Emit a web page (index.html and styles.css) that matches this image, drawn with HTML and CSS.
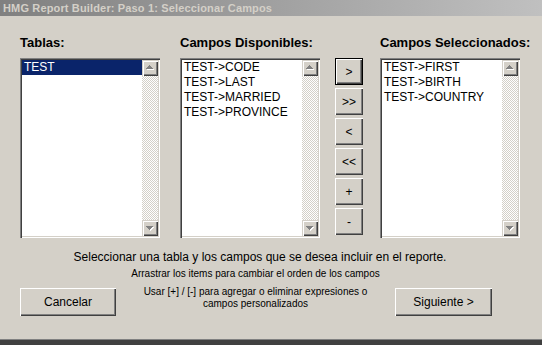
FILE: index.html
```html
<!DOCTYPE html>
<html lang="es">
<head>
  <meta charset="UTF-8">
  <title>HMG Report Builder: Paso 1: Seleccionar Campos</title>
  <link rel="stylesheet" href="styles.css">
</head>
<body>
  <div class="window">
    <div class="titlebar">HMG Report Builder: Paso 1: Seleccionar Campos</div>

    <div class="picker">
      <div class="col col-tables">
        <div class="col-label">Tablas:</div>
        <div class="listbox">
          <ul class="items">
            <li class="selected">TEST</li>
          </ul>
          <div class="scrollbar">
            <div class="scroll-btn">
              <svg width="16" height="16" viewBox="0 0 16 16" shape-rendering="crispEdges"><path fill="#fff" d="M8 6h1v1H8zM7 7h3v1H7zM6 8h5v1H6zM5 9h7v1H5z"/><path fill="#808080" d="M7 5h1v1H7zM6 6h3v1H6zM5 7h5v1H5zM4 8h7v1H4z"/></svg>
            </div>
            <div class="scroll-track"></div>
            <div class="scroll-btn">
              <svg width="16" height="16" viewBox="0 0 16 16" shape-rendering="crispEdges"><path fill="#fff" d="M5 7h7v1H5zM6 8h5v1H6zM7 9h3v1H7zM8 10h1v1H8z"/><path fill="#808080" d="M4 6h7v1H4zM5 7h5v1H5zM6 8h3v1H6zM7 9h1v1H7z"/></svg>
            </div>
          </div>
        </div>
      </div>

      <div class="col col-fields">
        <div class="col-label">Campos Disponibles:</div>
        <div class="listbox">
          <ul class="items">
            <li>TEST-&gt;CODE</li>
            <li>TEST-&gt;LAST</li>
            <li>TEST-&gt;MARRIED</li>
            <li>TEST-&gt;PROVINCE</li>
          </ul>
          <div class="scrollbar">
            <div class="scroll-btn">
              <svg width="16" height="16" viewBox="0 0 16 16" shape-rendering="crispEdges"><path fill="#fff" d="M8 6h1v1H8zM7 7h3v1H7zM6 8h5v1H6zM5 9h7v1H5z"/><path fill="#808080" d="M7 5h1v1H7zM6 6h3v1H6zM5 7h5v1H5zM4 8h7v1H4z"/></svg>
            </div>
            <div class="scroll-track"></div>
            <div class="scroll-btn">
              <svg width="16" height="16" viewBox="0 0 16 16" shape-rendering="crispEdges"><path fill="#fff" d="M5 7h7v1H5zM6 8h5v1H6zM7 9h3v1H7zM8 10h1v1H8z"/><path fill="#808080" d="M4 6h7v1H4zM5 7h5v1H5zM6 8h3v1H6zM7 9h1v1H7z"/></svg>
            </div>
          </div>
        </div>
      </div>

      <div class="col col-moves">
        <button class="move-btn default">&gt;</button>
        <button class="move-btn">&gt;&gt;</button>
        <button class="move-btn">&lt;</button>
        <button class="move-btn">&lt;&lt;</button>
        <button class="move-btn">+</button>
        <button class="move-btn">-</button>
      </div>

      <div class="col col-selected">
        <div class="col-label">Campos Seleccionados:</div>
        <div class="listbox">
          <ul class="items">
            <li>TEST-&gt;FIRST</li>
            <li>TEST-&gt;BIRTH</li>
            <li>TEST-&gt;COUNTRY</li>
          </ul>
          <div class="scrollbar">
            <div class="scroll-btn">
              <svg width="16" height="16" viewBox="0 0 16 16" shape-rendering="crispEdges"><path fill="#fff" d="M8 6h1v1H8zM7 7h3v1H7zM6 8h5v1H6zM5 9h7v1H5z"/><path fill="#808080" d="M7 5h1v1H7zM6 6h3v1H6zM5 7h5v1H5zM4 8h7v1H4z"/></svg>
            </div>
            <div class="scroll-track"></div>
            <div class="scroll-btn">
              <svg width="16" height="16" viewBox="0 0 16 16" shape-rendering="crispEdges"><path fill="#fff" d="M5 7h7v1H5zM6 8h5v1H6zM7 9h3v1H7zM8 10h1v1H8z"/><path fill="#808080" d="M4 6h7v1H4zM5 7h5v1H5zM6 8h3v1H6zM7 9h1v1H7z"/></svg>
            </div>
          </div>
        </div>
      </div>
    </div>

    <div class="message">Seleccionar una tabla y los campos que se desea incluir en el reporte.</div>

    <div class="footer">
      <div class="hint hint-drag">Arrastrar los items para cambiar el orden de los campos</div>
      <button class="btn btn-cancel">Cancelar</button>
      <div class="hint hint-usage">Usar [+] / [-] para agregar o eliminar expresiones o<br>campos personalizados</div>
      <button class="btn btn-next">Siguiente &gt;</button>
    </div>
  </div>
</body>
</html>
```

FILE: styles.css
```css
:root {
  --face: #d4d0c8;
  --light: #ffffff;
  --shadow: #808080;
  --dark: #404040;
  --select: #0a246a;
}
html, body { margin:0; padding:0; background:var(--dark); font-family:'Liberation Sans', Arial, sans-serif; color:#000; }

.window { width:542px; height:339px; background:var(--face); border-bottom:1px solid var(--shadow); display:flex; flex-direction:column; }
.titlebar { height:16px; line-height:16px; padding-left:3px; background:linear-gradient(to right, #808080, #c0c0c0); color:#d4d0c8; font-size:11px; font-weight:bold; letter-spacing:0.15px; white-space:nowrap; }

.picker { display:flex; padding:20px 0 0 20px; }
.col { display:flex; flex-direction:column; width:140px; }
.col-tables { margin-right:20px; }
.col-fields { margin-right:15px; }
.col-moves { width:28px; margin-right:17px; padding-top:22px; gap:3px; }
.col-label { font-size:13px; font-weight:bold; line-height:14px; margin-bottom:8px; white-space:nowrap; }

.listbox { height:180px; box-sizing:border-box; padding:2px; display:flex; background:#fff;
  box-shadow:inset 1px 1px var(--shadow), inset 2px 2px var(--dark), inset -1px -1px var(--light), inset -2px -2px var(--face); }
.items { flex:1; list-style:none; margin:0; padding:0; font-size:12px; line-height:15px; }
.items li { height:15px; padding-left:2px; white-space:nowrap; }
.items li.selected { background:var(--select); color:#fff; }

.scrollbar { width:16px; display:flex; flex-direction:column; background:repeating-conic-gradient(#fff 0 25%, var(--face) 0 50%) 0 0/2px 2px; }
.scroll-btn { height:16px; background:var(--face);
  box-shadow:inset 1px 1px var(--face), inset 2px 2px var(--light), inset -1px -1px var(--dark), inset -2px -2px var(--shadow); }
.scroll-btn svg { display:block; }
.scroll-track { flex:1; }

.move-btn, .btn { border:none; padding:0; background:var(--face); font-family:inherit; font-size:12px; color:#000;
  box-shadow:inset 1px 1px var(--light), inset -1px -1px var(--dark), inset -2px -2px var(--shadow); }
.move-btn { width:28px; height:27px; }
.move-btn.default { box-shadow:inset 0 0 0 1px #000, inset 2px 2px var(--light), inset -2px -2px var(--dark), inset -3px -3px var(--shadow); }

.message { margin-top:12px; padding-right:22px; text-align:center; font-size:12px; line-height:15px; }

.footer { display:grid; grid-template-columns:96px 279px 97px; grid-template-rows:auto auto; row-gap:6px; padding-left:20px; margin-top:3px; }
.hint { font-size:10px; line-height:12px; text-align:center; white-space:nowrap; }
.hint-drag { grid-column:2; grid-row:1; }
.btn-cancel { grid-column:1; grid-row:2; }
.hint-usage { grid-column:2; grid-row:2; }
.btn-next { grid-column:3; grid-row:2; }
.btn { height:28px; margin-top:2px; }
```
